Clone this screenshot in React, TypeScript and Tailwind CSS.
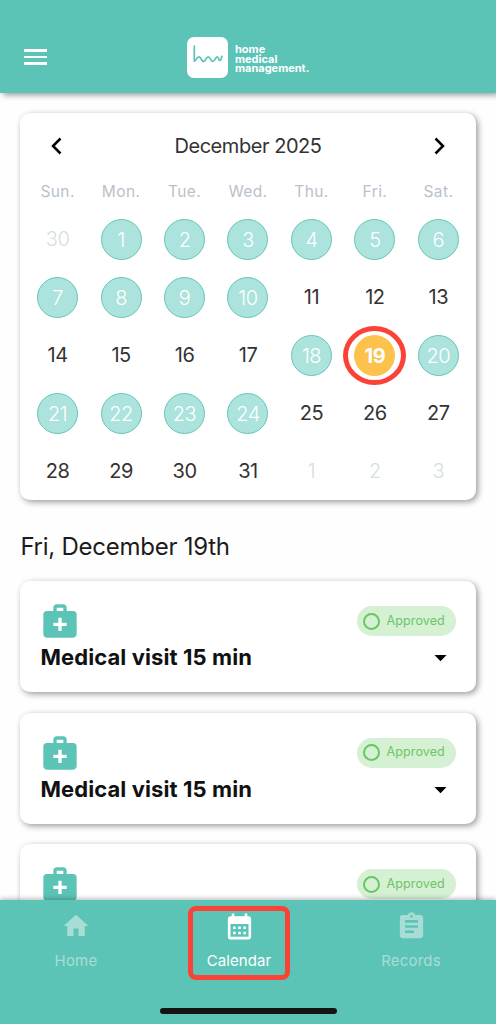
import { clsx } from "clsx";
import {
  MdArrowDropDown,
  MdAssignment,
  MdCalendarMonth,
  MdHome,
  MdMedicalServices,
} from "react-icons/md";

const weekDays = ["Sun.", "Mon.", "Tue.", "Wed.", "Thu.", "Fri.", "Sat."];
const markedDays = [1, 2, 3, 4, 5, 6, 7, 8, 9, 10, 18, 20, 21, 22, 23, 24];
const selectedDay = 19;

// One leading day of November, three trailing days of January
const days = Array.from({ length: 35 }, (_, i) => {
  if (i === 0) return { day: 30, outside: true };
  if (i > 31) return { day: i - 31, outside: true };
  return { day: i, outside: false };
});

function Header() {
  return (
    <header className="z-10 flex h-[93px] shrink-0 items-start bg-[#5cc4b7] pl-6 shadow-[3px_2px_6px_rgba(0,0,0,0.4)]">
      <button className="mt-[49px] flex w-[23px] flex-col gap-[4px]">
        <span className="h-[2.5px] w-full bg-white" />
        <span className="h-[2.5px] w-full bg-white" />
        <span className="h-[2.5px] w-full bg-white" />
      </button>
      <div className="mt-[37px] ml-[140px] flex">
        <div className="h-[41px] w-[41px] rounded-[7px] bg-white">
          <svg viewBox="0 0 41 41" className="h-full w-full" fill="none">
            <path
              d="M7.3 9V24C8.8 24.8 9.5 19.8 12 19.8C14.5 19.8 14 24.4 16.5 24.4C19 24.4 18.8 19.8 21.2 19.8C23.5 19.8 23.5 24.4 25.9 24.4C28.2 24.4 28.2 19.8 30.2 19.8C32 19.8 31.3 24 33 23.4C34.2 23 34 21 35 19.3"
              stroke="#5cc4b7"
              strokeWidth="1.7"
              strokeLinecap="round"
            />
          </svg>
        </div>
        <div className="mt-[8px] ml-[7px] text-[11px] leading-[9.5px] font-bold text-white">
          <p>home</p>
          <p>medical</p>
          <p>management.</p>
        </div>
      </div>
    </header>
  );
}

function Calendar() {
  return (
    <section className="h-[387.5px] rounded-[10px] bg-white px-[5.5px] shadow-[2px_2px_6px_rgba(0,0,0,0.4)]">
      <div className="flex h-[65px] items-center justify-between px-[20px]">
        <svg width="22" height="22" viewBox="0 0 22 22" fill="none">
          <path d="M14.5 3.5L7 11L14.5 18.5" stroke="#000" strokeWidth="2.5" />
        </svg>
        <h1 className="text-[20px] tracking-[-0.45px] text-[#333]">December 2025</h1>
        <svg width="22" height="22" viewBox="0 0 22 22" fill="none">
          <path d="M7.5 3.5L15 11L7.5 18.5" stroke="#000" strokeWidth="2.5" />
        </svg>
      </div>
      <div className="grid h-[32px] grid-cols-7 items-start pt-[3px] text-center text-[15.5px] leading-[22px] tracking-[0.4px] text-[#b9c1cb]">
        {weekDays.map((name) => (
          <span key={name}>{name}</span>
        ))}
      </div>
      <div className="grid auto-rows-[58.1px] grid-cols-7 place-items-center">
        {days.map(({ day, outside }, i) => {
          const marked = !outside && markedDays.includes(day);
          const selected = !outside && day === selectedDay;
          return (
            <div
              key={i}
              className={clsx(
                "relative flex h-[41px] w-[41px] items-center justify-center rounded-full text-[20px] tracking-[-0.5px]",
                outside && "font-light text-[#d5dde2]",
                marked && "border-[1.5px] border-[#66c6b8] bg-[#ace3dc] pt-px font-light text-white",
                selected && "bg-[#fdc24b] pt-px font-bold text-white",
                !outside && !marked && !selected && "text-[#333]",
              )}
            >
              {day}
              {selected && (
                <span className="absolute -inset-x-[11px] -inset-y-[9px] rounded-[50%] border-[5px] border-[#fb4237]" />
              )}
            </div>
          );
        })}
      </div>
    </section>
  );
}

function VisitCard() {
  return (
    <article className="flex h-[111px] shrink-0 justify-between rounded-[10px] bg-white pr-5 pl-5 shadow-[2px_2px_6px_rgba(0,0,0,0.4)]">
      <div className="pt-5">
        <MdMedicalServices size={40} color="#5cc4b7" />
        <h3 className="mt-[1px] text-[22px] leading-[30px] font-bold tracking-[0.1px] text-[#111]">
          Medical visit 15 min
        </h3>
      </div>
      <div className="flex flex-col items-end pt-[25px]">
        <span className="flex h-[30px] w-[99px] items-center gap-[7px] rounded-full bg-[#d5f0d3] pl-1.5 text-[12.5px] tracking-[0.1px] text-[#6cc568]">
          <span className="h-[17px] w-[17px] shrink-0 rounded-full border-2 border-[#66c862]" />
          Approved
        </span>
        <MdArrowDropDown size={29} className="mt-[7px] mr-[1px]" />
      </div>
    </article>
  );
}

function TabBar() {
  return (
    <nav className="z-10 flex h-[124px] shrink-0 flex-col items-center justify-between bg-[#5cc4b7] pb-[10px] shadow-[0_-1px_5px_rgba(0,0,0,0.3)]">
      <div className="flex w-full items-start justify-between pr-[35px] pl-[26px] text-[15px]">
        <div className="flex w-[100px] flex-col items-center pt-[11px] tracking-[0.2px] text-[#a8ddd6]">
          <MdHome size={30} />
          <span className="mt-[9px]">Home</span>
        </div>
        <div className="mt-[5.5px] -ml-[9px] flex h-[74px] w-[102px] flex-col items-center rounded-[8px] border-[5px] border-[#fb4237] text-white">
          <MdCalendarMonth size={31} className="mt-[0.5px]" />
          <span className="mt-[8px] tracking-[0.1px]">Calendar</span>
        </div>
        <div className="flex w-[100px] flex-col items-center pt-[11px] tracking-[0.2px] text-[#a8ddd6]">
          <MdAssignment size={31} />
          <span className="mt-[8px]">Records</span>
        </div>
      </div>
      <div className="h-[6px] w-[177px] rounded-full bg-[#141414]" />
    </nav>
  );
}

export default function App() {
  return (
    <div className="flex h-screen w-[496px] flex-col overflow-hidden bg-[#fefefe] font-['Inter','Liberation_Sans',sans-serif]">
      <Header />
      <main className="flex min-h-0 flex-1 flex-col overflow-hidden px-[20.4px] pt-5">
        <Calendar />
        <h2 className="mt-[30.5px] text-[24px] leading-[32px] tracking-[-0.25px] text-[#1c1c1c]">
          Fri, December 19th
        </h2>
        <div className="mt-[18.4px] flex flex-col gap-[20.4px]">
          <VisitCard />
          <VisitCard />
          <VisitCard />
        </div>
      </main>
      <TabBar />
    </div>
  );
}
